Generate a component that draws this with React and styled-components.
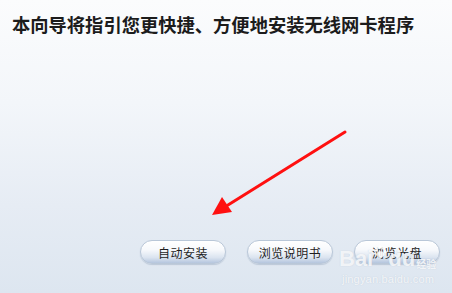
import React from 'react'
import styled, { createGlobalStyle } from 'styled-components'

const Global = createGlobalStyle`
  html, body { margin: 0; padding: 0; }
  body { font-family: "Noto Sans CJK SC", "Noto Sans", sans-serif; }
`

const Page = styled.div`
  position: relative;
  width: 452px;
  height: 293px;
  overflow: hidden;
  display: flex;
  flex-direction: column;
  background: linear-gradient(180deg, #fbfcfd 0%, #f3f6fa 35%, #e6ecf4 70%, #dde6f0 100%);
`

const Title = styled.h1`
  margin: 0;
  padding: 11px 0 0 12px;
  font-size: 18.3px;
  line-height: 26px;
  font-weight: bold;
  color: #1c1c1c;
  white-space: nowrap;
`

const ButtonRow = styled.div`
  margin-top: auto;
  margin-bottom: 29px;
  display: flex;
  justify-content: flex-end;
  gap: 21px;
  padding-right: 12px;
`

const Button = styled.div`
  width: 86px;
  height: 24px;
  box-sizing: border-box;
  border-radius: 12px;
  border: 1px solid #b9c7d8;
  background: linear-gradient(180deg, #ffffff 0%, #f7f9fc 40%, #dbe4f0 75%, #b5c6de 100%);
  box-shadow: 0 1px 1px rgba(120, 140, 170, 0.35), inset 0 1px 0 #ffffff;
  display: flex;
  align-items: center;
  justify-content: center;
  font-size: 12px;
  color: #1e1e1e;
  letter-spacing: 0.5px;
`

const Arrow = styled.svg`
  position: absolute;
  left: 0;
  top: 0;
  pointer-events: none;
`

const Watermark = styled.div`
  position: absolute;
  left: 339px;
  top: 245px;
  display: flex;
  flex-direction: column;
  color: rgba(255, 255, 255, 0.8);
  font-family: "Liberation Sans", Arial, sans-serif;
  pointer-events: none;
`

const Brand = styled.div`
  display: flex;
  align-items: flex-end;
  font-size: 22px;
  font-weight: bold;
  line-height: 23px;
  text-shadow: 0 0 1px rgba(160, 175, 195, 0.5);
`

const BrandSub = styled.span`
  font-size: 10px;
  line-height: 13px;
  margin-left: 1px;
  font-family: "Noto Sans CJK SC", sans-serif;
`

const Domain = styled.div`
  font-size: 11px;
  line-height: 13px;
  margin-top: 3px;
  margin-left: 3px;
  letter-spacing: 0.2px;
  text-shadow: 0 0 1px rgba(160, 175, 195, 0.5);
`

export default function App() {
  return (
    <>
      <Global />
      <Page>
        <Title>本向导将指引您更快捷、方便地安装无线网卡程序</Title>
        <ButtonRow>
          <Button>自动安装</Button>
          <Button>浏览说明书</Button>
          <Button>浏览光盘</Button>
        </ButtonRow>
        <Arrow width="452" height="293" viewBox="0 0 452 293">
          <line x1="345" y1="132" x2="228" y2="205" stroke="#ff1010" strokeWidth="3" strokeLinecap="round" />
          <polygon points="212,215 222,197 232,212" fill="#ff1010" />
        </Arrow>
        <Watermark>
          <Brand>
            Bai
            <svg width="13" height="13" viewBox="0 0 14 14" style={{ margin: '0 1px 12px' }}>
              <g fill="rgba(255,255,255,0.85)">
                <ellipse cx="3" cy="4" rx="1.6" ry="2.2" />
                <ellipse cx="6.5" cy="2" rx="1.6" ry="2" />
                <ellipse cx="10" cy="3" rx="1.6" ry="2" />
                <ellipse cx="12" cy="7" rx="1.4" ry="1.8" />
                <ellipse cx="7" cy="10" rx="4" ry="3.2" />
              </g>
            </svg>
            du
            <BrandSub>经验</BrandSub>
          </Brand>
          <Domain>jingyan.baidu.com</Domain>
        </Watermark>
      </Page>
    </>
  )
}
